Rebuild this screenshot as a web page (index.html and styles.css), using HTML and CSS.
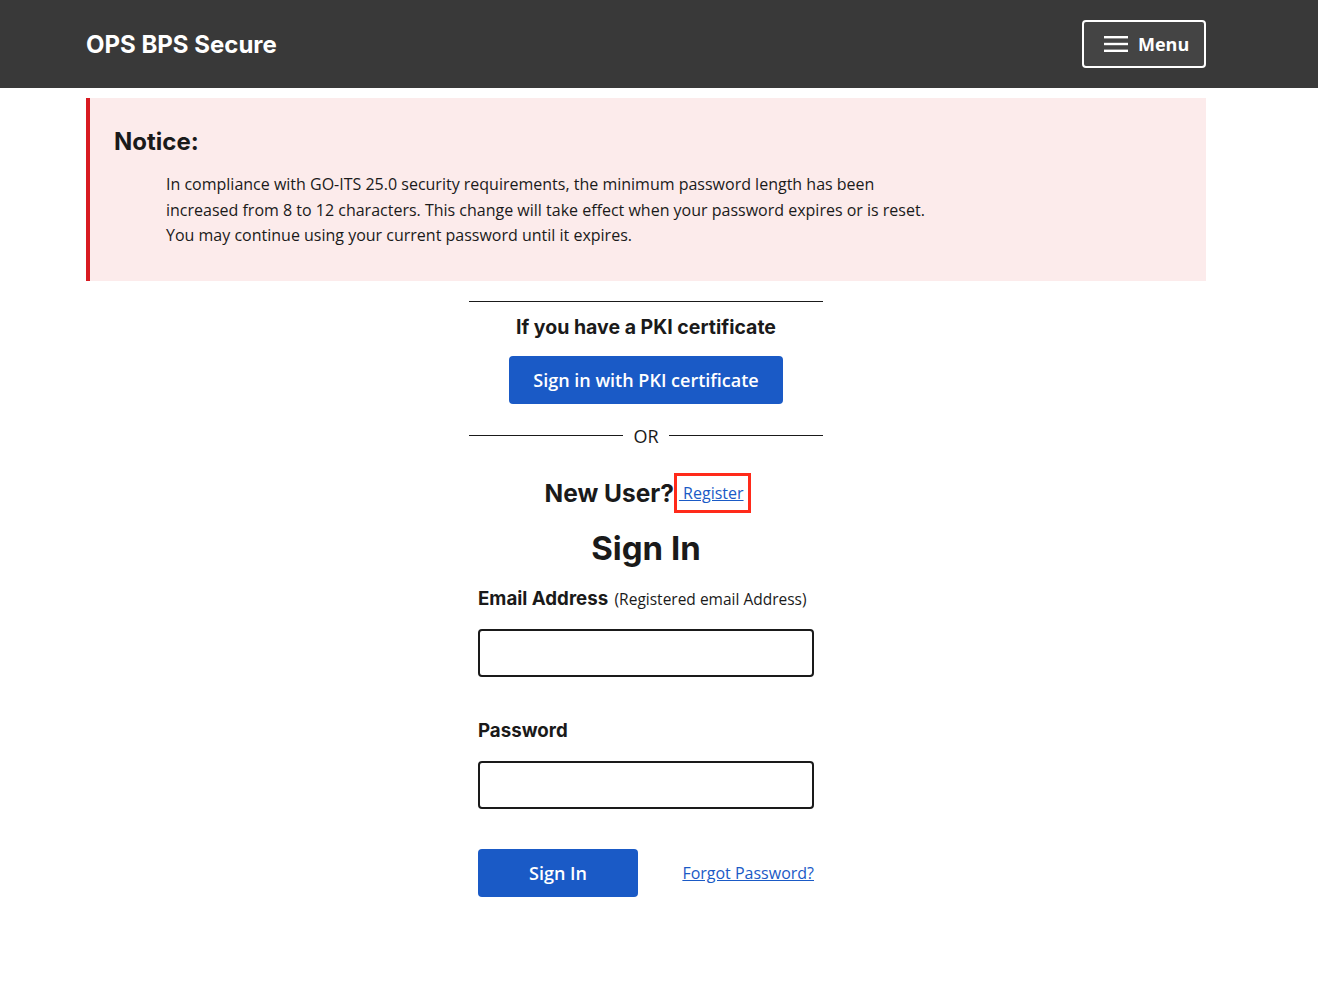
FILE: index.html
```html
<!DOCTYPE html>
<html lang="en">
<head>
    <meta charset="UTF-8">
    <meta name="viewport" content="width=device-width, initial-scale=1.0">
    <title>OPS BPS Secure - Sign In</title>
    <link rel="stylesheet" href="styles.css">
</head>
<body>
    <header class="site-header">
        <div class="header-inner">
            <div class="site-title">OPS BPS Secure</div>
            <button class="menu-button">
                <svg class="menu-icon" width="24" height="16" viewBox="0 0 24 16">
                    <rect x="0" y="0" width="24" height="2.4" fill="#fff"></rect>
                    <rect x="0" y="6.8" width="24" height="2.4" fill="#fff"></rect>
                    <rect x="0" y="13.6" width="24" height="2.4" fill="#fff"></rect>
                </svg>
                Menu
            </button>
        </div>
    </header>

    <main class="page">
        <div class="notice">
            <h2>Notice:</h2>
            <p>In compliance with GO-ITS 25.0 security requirements, the minimum password length has been increased from 8 to 12 characters. This change will take effect when your password expires or is reset. You may continue using your current password until it expires.</p>
        </div>

        <div class="signin-box">
            <div class="pki">
                <h3>If you have a PKI certificate</h3>
                <button class="btn btn-pki">Sign in with PKI certificate</button>
            </div>
            <div class="or-divider"><span>OR</span></div>

            <div class="new-user">
                <span class="new-user-label">New User?</span><a href="#" class="register-link">&nbsp;Register</a>
            </div>

            <h1 class="signin-title">Sign In</h1>

            <form class="signin-form">
                <label class="field-label" for="email">Email Address <span class="hint">(Registered email Address)</span></label>
                <input type="text" id="email" class="field-input">

                <label class="field-label" for="password">Password</label>
                <input type="password" id="password" class="field-input">

                <div class="form-actions">
                    <button type="submit" class="btn btn-signin">Sign In</button>
                    <a href="#" class="forgot-link">Forgot Password?</a>
                </div>
            </form>
        </div>
    </main>
</body>
</html>
```

FILE: styles.css
```css
body {
    margin: 0;
    font-family: "Open Sans", Arial, sans-serif;
    color: #1a1a1a;
    background: #ffffff;
}
.site-header {
    background-color: #393939;
    height: 88px;
}
.header-inner {
    width: 1120px;
    margin: 0 0 0 86px;
    height: 88px;
    display: flex;
    align-items: center;
    justify-content: space-between;
}
.site-title {
    font-family: Inter, "Open Sans", sans-serif;
    font-weight: 700;
    font-size: 24px;
    color: #ffffff;
}
.menu-button {
    display: flex;
    align-items: center;
    gap: 10px;
    width: 124px;
    height: 48px;
    padding: 0 0 0 20px;
    background-color: #444444;
    border: 2px solid #ffffff;
    border-radius: 4px;
    color: #ffffff;
    font-family: "Open Sans", sans-serif;
    font-weight: 700;
    font-size: 18px;
    cursor: pointer;
}
.page {
    width: 1120px;
    margin: 0 0 0 86px;
    padding-top: 10px;
}
.notice {
    background-color: #fcebeb;
    border-left: 4px solid #d81a21;
    padding: 28px 24px 32px 24px;
}
.notice h2 {
    margin: 0 0 14px 0;
    font-family: Inter, "Open Sans", sans-serif;
    font-weight: 700;
    font-size: 24px;
    line-height: 32px;
}
.notice p {
    margin: 0 0 0 52px;
    max-width: 770px;
    font-size: 16px;
    line-height: 25.6px;
}
.signin-box {
    width: 354px;
    margin: 20px auto 0 auto;
    text-align: center;
}
.pki {
    border-top: 1px solid #1a1a1a;
    padding-top: 12px;
}
.pki h3 {
    margin: 0 0 16px 0;
    font-family: Inter, "Open Sans", sans-serif;
    font-weight: 700;
    font-size: 19.5px;
    line-height: 26px;
}
.btn {
    background-color: #1a5ac6;
    color: #ffffff;
    border: none;
    border-radius: 4px;
    font-family: "Open Sans", sans-serif;
    font-weight: 600;
    font-size: 18px;
    height: 48px;
    cursor: pointer;
}
.btn-pki {
    width: 274px;
}
.or-divider {
    display: flex;
    align-items: center;
    gap: 10px;
    margin-top: 19px;
    font-size: 18px;
    line-height: 26px;
}
.or-divider::before, .or-divider::after {
    content: "";
    flex: 1;
    border-top: 1px solid #1a1a1a;
}
.new-user {
    margin-top: 27px;
    display: flex;
    justify-content: center;
    align-items: center;
}
.new-user-label {
    font-family: Inter, "Open Sans", sans-serif;
    font-weight: 700;
    font-size: 24.5px;
    line-height: 32px;
}
.register-link {
    color: #1a5ac6;
    font-size: 16px;
    outline: 3px solid #ff2a1a;
    padding: 5px 4px 5px 2px;
    margin-left: 3px;
    line-height: 24px;
}
.signin-title {
    margin: 16px 0 0 0;
    font-family: Inter, "Open Sans", sans-serif;
    font-weight: 700;
    font-size: 33px;
    line-height: 44px;
}
.signin-form {
    width: 336px;
    margin: 15px auto 0 auto;
    text-align: left;
    display: flex;
    flex-direction: column;
}
.field-label {
    font-family: Inter, "Open Sans", sans-serif;
    font-weight: 700;
    font-size: 18.7px;
    line-height: 28px;
    white-space: nowrap;
}
.hint {
    font-family: "Open Sans", sans-serif;
    font-weight: 400;
    font-size: 15.5px;
    margin-left: 2px;
}
.field-input {
    box-sizing: border-box;
    width: 336px;
    height: 48px;
    margin: 16px 0 40px 0;
    border: 2px solid #1a1a1a;
    border-radius: 4px;
    font-size: 16px;
    padding: 8px;
}
.form-actions {
    display: flex;
    justify-content: space-between;
    align-items: center;
}
.btn-signin {
    width: 160px;
}
.forgot-link {
    color: #1a5ac6;
    font-size: 16px;
}
```
